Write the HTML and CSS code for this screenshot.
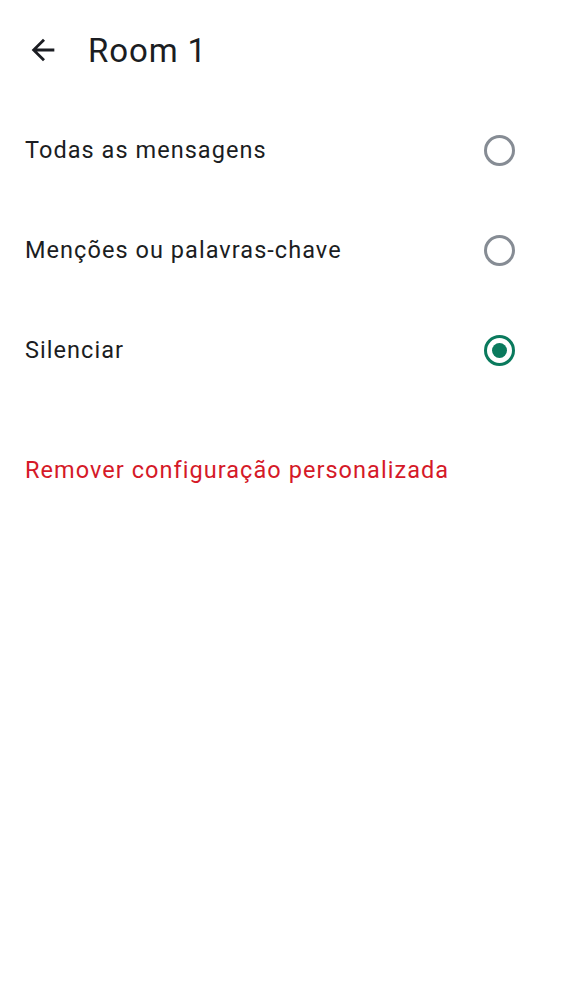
FILE: index.html
```html
<!DOCTYPE html>
<html>
<head>
<meta charset="utf-8">
<link rel="stylesheet" href="styles.css">
</head>
<body>
<header class="topbar">
  <button class="back" aria-label="Voltar">
    <svg width="34" height="34" viewBox="0 0 24 24"><path d="M20 11H7.83l5.59-5.59L12 4l-8 8 8 8 1.41-1.41L7.83 13H20v-2z" fill="#1b1d22"/></svg>
  </button>
  <h1 class="title">Room 1</h1>
</header>
<main class="list">
  <div class="row"><span class="label">Todas as mensagens</span><span class="radio"></span></div>
  <div class="row"><span class="label">Menções ou palavras-chave</span><span class="radio"></span></div>
  <div class="row"><span class="label">Silenciar</span><span class="radio checked"></span></div>
  <div class="remove">Remover configuração personalizada</div>
</main>
</body>
</html>
```
FILE: styles.css
```css
html, body { margin: 0; padding: 0; background: #fff; }
body { font-family: Roboto, "Noto Sans", sans-serif; color: #1b1d22; width: 562px; }
.topbar { display: flex; align-items: center; height: 100px; padding-left: 26px; }
.back { border: 0; background: none; padding: 0; width: 34px; height: 34px; display: flex; margin-right: 28px; margin-top: -1px; }
.title { margin: 0; font-size: 33px; font-weight: 400; color: #1b1d22; letter-spacing: 0.9px; }
.list { display: flex; flex-direction: column; }
.row { display: flex; align-items: center; justify-content: space-between; height: 100px; padding: 0 47px 0 25px; }
.label { font-size: 23.5px; letter-spacing: 1.05px; }
.radio { width: 25px; height: 25px; border: 3px solid #868c94; border-radius: 50%; box-sizing: content-box; position: relative; }
.radio.checked { border-color: #0a7a5d; }
.radio.checked::after { content: ""; position: absolute; left: 5px; top: 5px; width: 15px; height: 15px; border-radius: 50%; background: #0a7a5d; }
.remove { color: #d51928; font-size: 23.5px; letter-spacing: 1.05px; padding: 0 25px; margin-top: 54px; line-height: 32px; }
```
